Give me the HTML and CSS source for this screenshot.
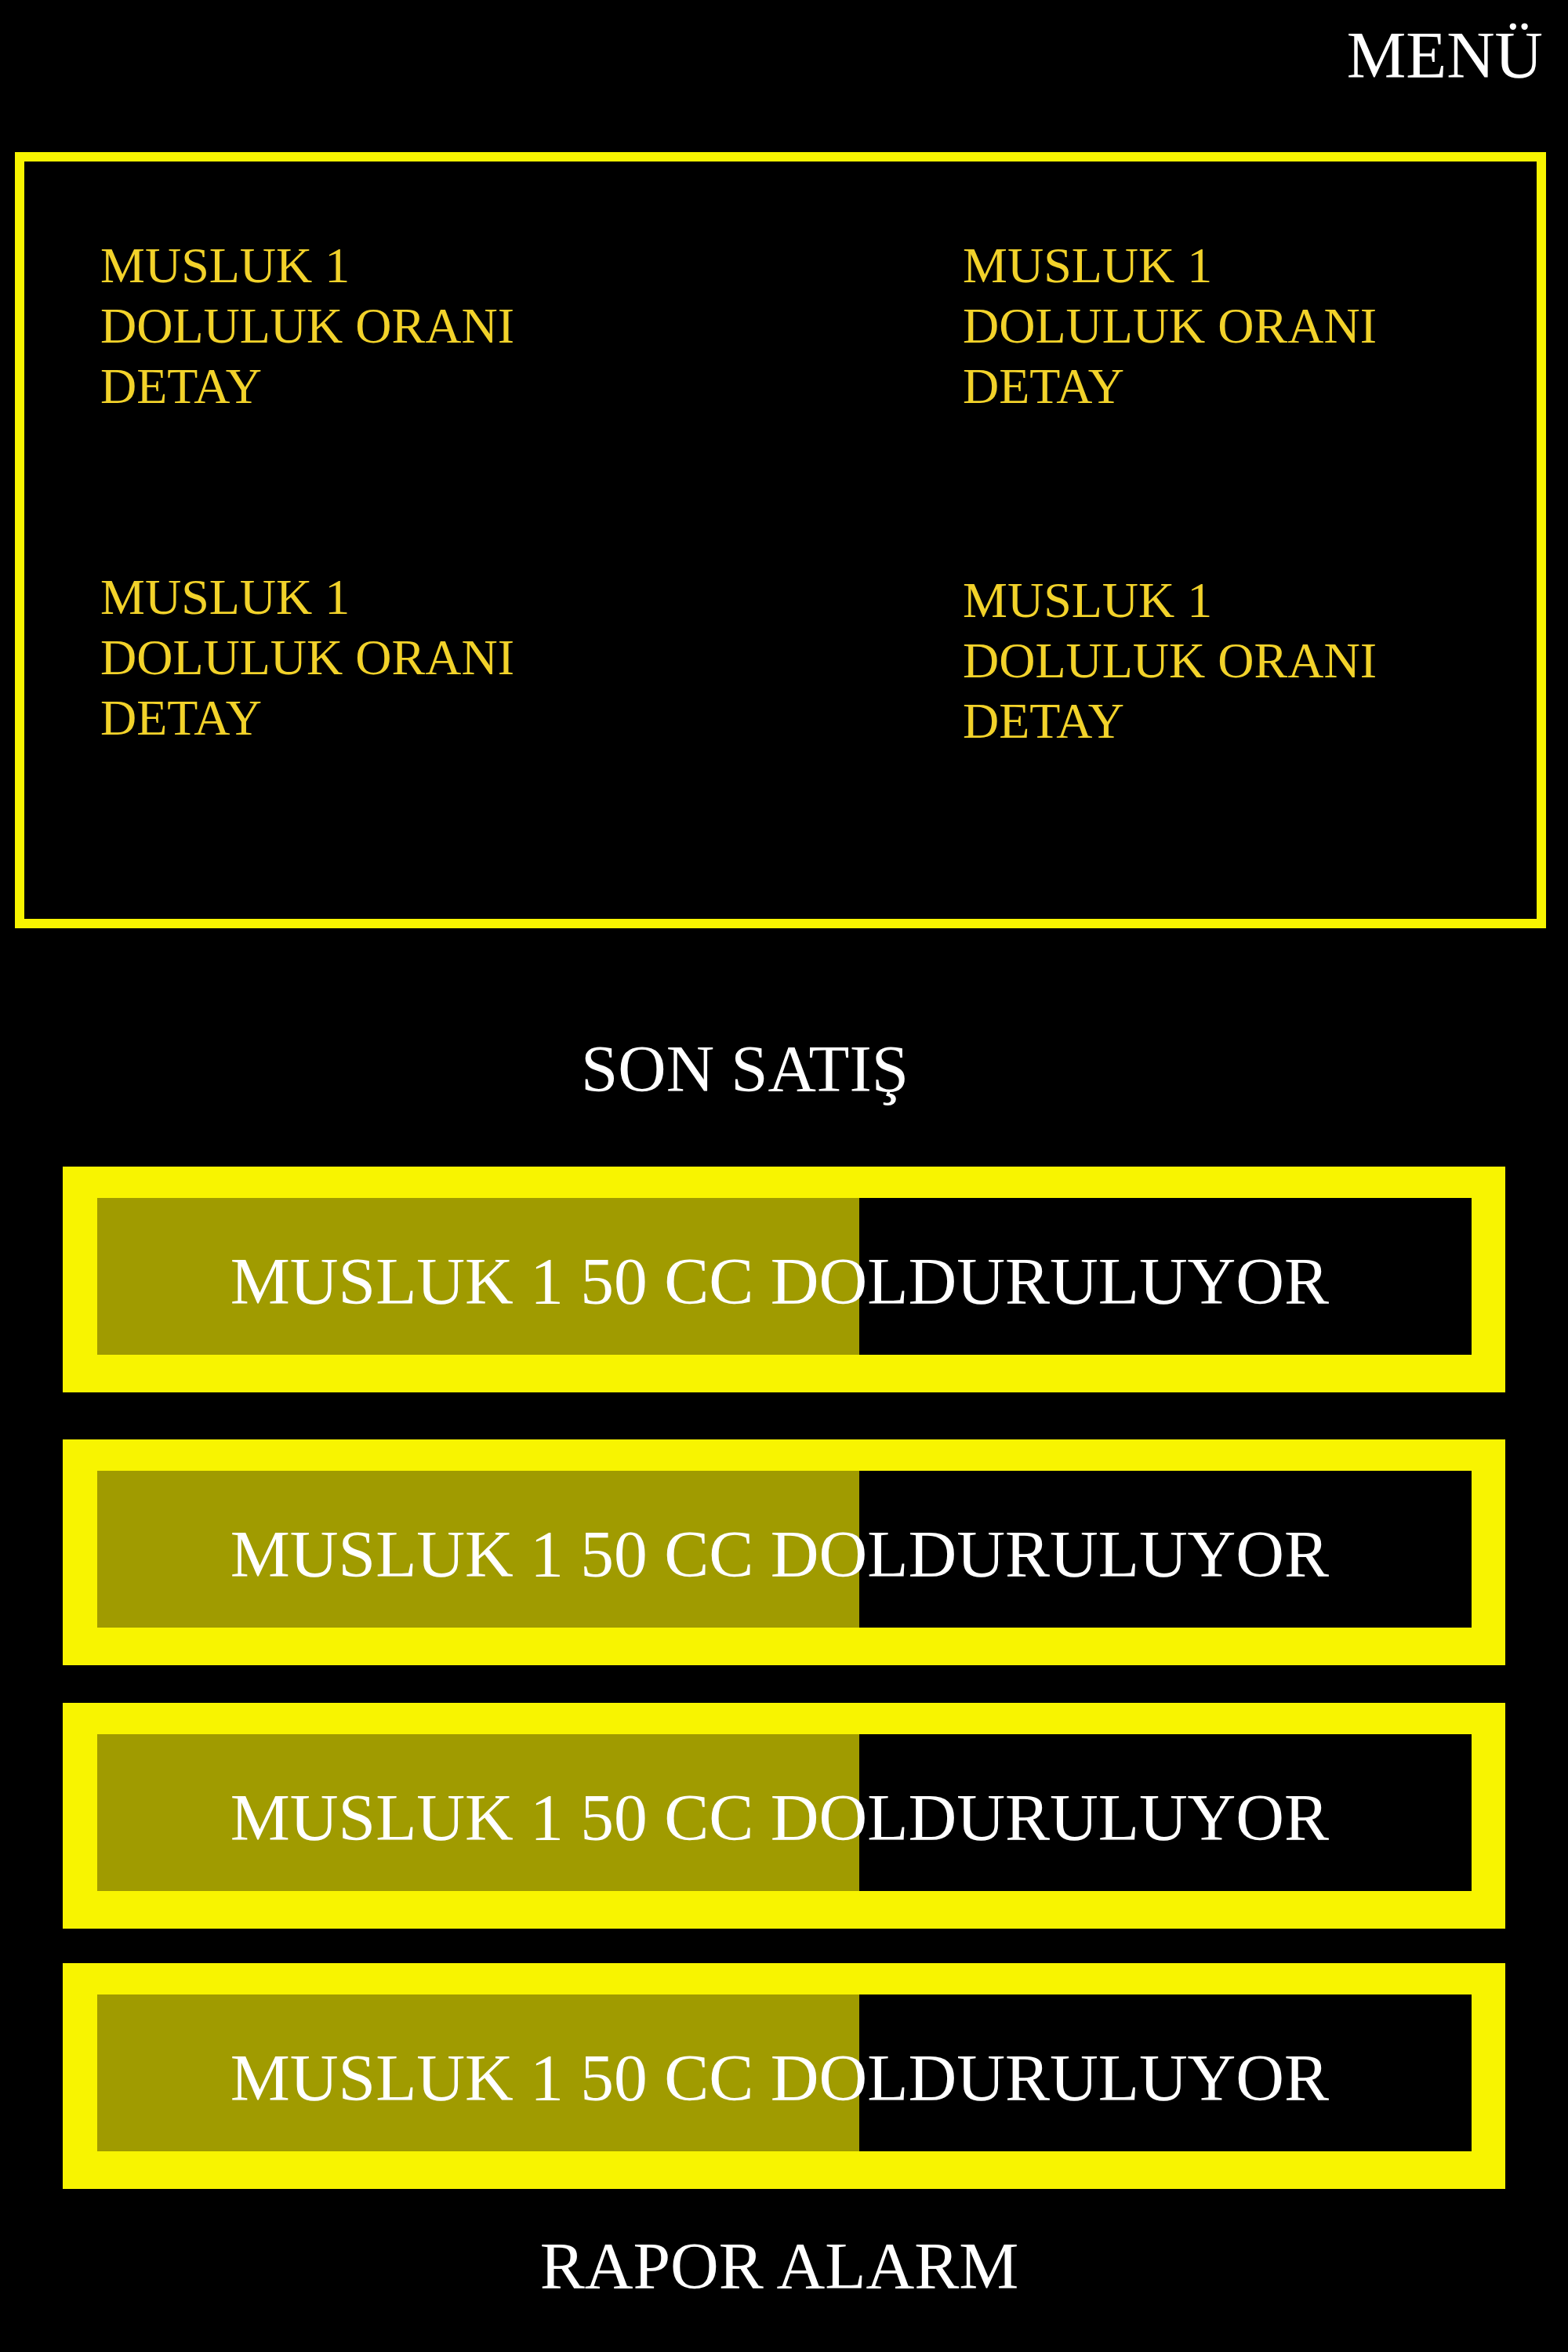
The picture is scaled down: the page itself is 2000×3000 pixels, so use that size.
FILE: index.html
```html
<!DOCTYPE html>
<html lang="tr">
<head>
<meta charset="utf-8">
<title>Musluk Paneli</title>
<link rel="stylesheet" href="styles.css">
</head>
<body>
  <header class="topbar">
    <span class="menu">MENÜ</span>
  </header>

  <section class="taps">
    <div class="tap">MUSLUK 1<br>DOLULUK ORANI<br>DETAY</div>
    <div class="tap">MUSLUK 1<br>DOLULUK ORANI<br>DETAY</div>
    <div class="tap">MUSLUK 1<br>DOLULUK ORANI<br>DETAY</div>
    <div class="tap tap-low">MUSLUK 1<br>DOLULUK ORANI<br>DETAY</div>
  </section>

  <h2 class="section-title">SON SATIŞ</h2>

  <section class="sales">
    <div class="sale">
      <div class="sale-inner" style="--pct: 55.45%">MUSLUK 1 50 CC DOLDURULUYOR</div>
    </div>
    <div class="sale">
      <div class="sale-inner" style="--pct: 55.45%">MUSLUK 1 50 CC DOLDURULUYOR</div>
    </div>
    <div class="sale">
      <div class="sale-inner" style="--pct: 55.45%">MUSLUK 1 50 CC DOLDURULUYOR</div>
    </div>
    <div class="sale">
      <div class="sale-inner" style="--pct: 55.45%">MUSLUK 1 50 CC DOLDURULUYOR</div>
    </div>
  </section>

  <footer class="footer">RAPOR ALARM</footer>
</body>
</html>
```

FILE: styles.css
```css
html, body {
  margin: 0;
  padding: 0;
  background: #000;
}

body {
  font-family: "Liberation Serif", "Times New Roman", serif;
  color: #fff;
}

.topbar {
  display: flex;
  justify-content: flex-end;
  padding: 20px 32px 0 0;
  height: 100px;
}

.menu {
  font-size: 85px;
  line-height: 100px;
  color: #fff;
}

.taps {
  margin: 74px 28px 0 19px;
  border: 12px solid #f8f400;
  padding: 94px 0 214px 97px;
  display: grid;
  grid-template-columns: 1100px 1fr;
  row-gap: 192px;
  color: #f2d22a;
  font-size: 64px;
  line-height: 77px;
}

.tap-low {
  padding-top: 4px;
}

.section-title {
  margin: 129px 0 0 0;
  padding-right: 100px;
  font-weight: normal;
  font-size: 85px;
  line-height: 100px;
  text-align: center;
  color: #fff;
}

.sales {
  display: flex;
  flex-direction: column;
  margin: 75px 80px 0 80px;
}

.sale {
  border-style: solid;
  border-color: #f8f400;
  border-width: 40px 43px 48px 44px;
}

.sale:nth-child(2) { margin-top: 60px; }
.sale:nth-child(3) { margin-top: 48px; }
.sale:nth-child(4) { margin-top: 44px; }

.sale-inner {
  height: 188px;
  padding: 12px 12px 0 0;
  background: linear-gradient(to right, #a09b00 var(--pct), #000 var(--pct));
  font-size: 85.5px;
  line-height: 188px;
  text-align: center;
  white-space: nowrap;
  color: #fff;
}

.footer {
  margin-top: 48px;
  padding-right: 12px;
  font-size: 85.5px;
  line-height: 100px;
  text-align: center;
  color: #fff;
}
```
